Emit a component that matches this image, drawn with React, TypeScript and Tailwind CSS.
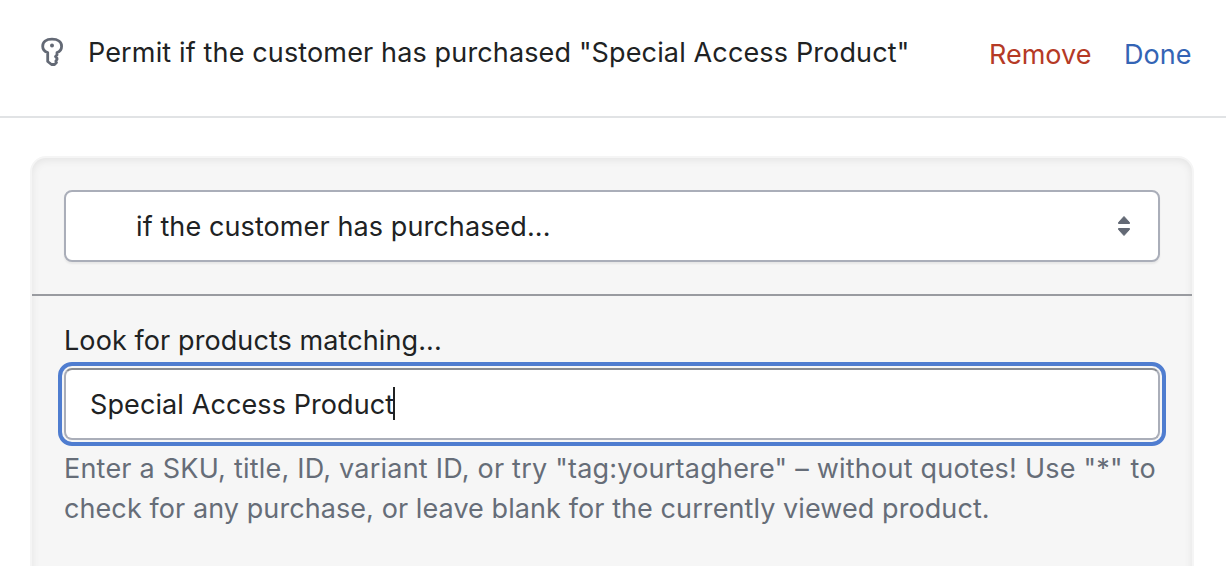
export default function App() {
  return (
    <main className="h-[566px] w-[1226px] overflow-hidden bg-white font-['Inter',sans-serif] text-[#202223]">
      <header className="flex h-[118px] border-b-2 border-[#e1e3e5] pl-[39px] pt-[33px]">
        <svg className="mt-[3px] h-8 w-7 shrink-0" viewBox="0 0 28 32" fill="none" stroke="#636975" strokeWidth="2.8" strokeLinejoin="round">
          <path d="M8.700 16.500C5.500 15.500 3.700 13 3.700 10.200C3.700 6 7 3.200 13 3.200S22.600 6 22.600 10.200C22.600 13 21 15.500 18 16.500V19L16.500 20.500L18 22.200V23.500L16.800 25L17.500 26.500L15.500 28.500H12.500L8.700 25.500V16.500Z" />
          <circle cx="13" cy="9.400" r="2" fill="#636975" stroke="none" />
        </svg>
        <h1 className="ml-[21px] w-[901px] whitespace-nowrap text-[27px] leading-10 tracking-[0.14px]">Permit if the customer has purchased "Special Access Product"</h1>
        <button className="mt-[2px] h-10 w-[135px] text-left text-[27px] text-[#b53a26]">Remove</button>
        <button className="mt-[2px] h-10 text-[27px] text-[#3464b5]">Done</button>
      </header>
      <section className="mx-8 mt-[40px] h-[430px] w-[1160px] rounded-t-[14px] bg-[#f6f6f6] shadow-[0_0_0_2px_#f5f5f5,inset_0_2px_8px_#00000014]">
        <div className="flex h-[138px] border-b-2 border-[#999ba0] px-8 pt-8">
          <div className="flex h-[72px] w-full items-center justify-between rounded-lg border-2 border-[#aaaeb9] bg-white pl-[70px] pr-[27px] shadow-[0_2px_2px_#00000010]">
            <span className="mt-[2px] text-[27px] tracking-[0.1px]">if the customer has purchased...</span>
            <svg width="14" height="22" viewBox="0 0 14 22" fill="#636975" stroke="#636975" strokeLinejoin="round"><path d="M7 1.500L12.500 7.500V8.500H1.500V7.500ZM1.500 13.500H12.500V14.500L7 20.500L1.500 14.500Z" /></svg>
          </div>
        </div>
        <div className="px-8 pt-[25px]">
          <label className="block h-[47px] text-[27px] leading-10 tracking-[0.09px]">Look for products matching...</label>
          <div className="flex h-[72px] items-center rounded-lg border-2 border-[#aaaeb9] border-t-[#898c92] bg-white pl-6 outline-4 outline-offset-2 outline-[#4f7dd0]">
            <span className="mt-[2px] text-[27px] tracking-[0.1px]">Special Access Product</span><span className="-ml-px -mt-px h-[33px] w-[2px] bg-[#202223]" />
          </div>
          <p className="mt-[9px] whitespace-nowrap text-[27px] leading-10 text-[#666d78]"><span className="tracking-[0.22px]">Enter a SKU, title, ID, variant ID, or try "tag:yourtaghere" – without quotes! Use "*" to</span><br /><span className="tracking-[0.08px]">check for any purchase, or leave blank for the currently viewed product.</span></p>
        </div>
      </section>
    </main>
  );
}
